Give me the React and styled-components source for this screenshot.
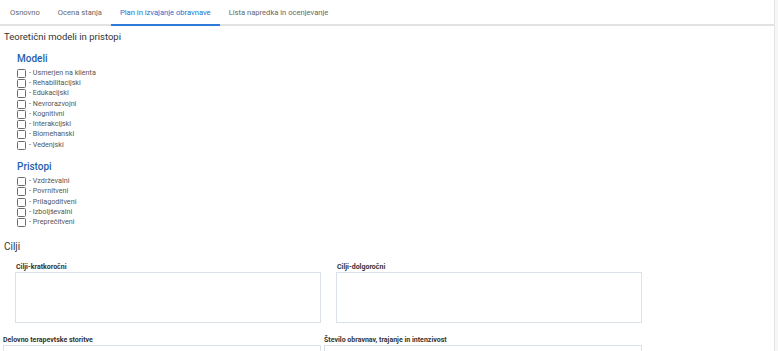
import React from 'react';
import styled, { createGlobalStyle } from 'styled-components';

const GlobalStyle = createGlobalStyle`
  html, body {
    margin: 0;
    padding: 0;
    background: #f6f6f6;
    font-family: Roboto, "Liberation Sans", sans-serif;
  }
`;

const Page = styled.div`
  width: 775px;
  height: 351px;
  background: #fff;
  border-right: 1px solid #e4e4e4;
  box-sizing: border-box;
  overflow: hidden;
`;

const Tabs = styled.div`
  display: flex;
  height: 24px;
  border-bottom: 2px solid #e2e2e2;
  box-sizing: content-box;
`;

const Tab = styled.div`
  display: flex;
  align-items: center;
  padding: 0 9px 0 ${p => (p.first ? 10 : 9)}px;
  margin-bottom: -2px;
  font-size: 7.6px;
  color: ${p => (p.active ? '#1d6fd0' : '#666')};
  border-bottom: 2px solid ${p => (p.active ? '#2f7ad8' : 'transparent')};
`;

const Title = styled.div`
  font-size: 9.5px;
  color: #333;
  padding: 5px 0 0 4px;
  line-height: 12px;
`;

const Group = styled.div`
  padding-left: 17px;
  margin-top: ${p => p.top}px;
`;

const GroupTitle = styled.div`
  font-size: 10px;
  font-weight: 500;
  color: #1f5fae;
  line-height: 12px;
  margin-bottom: 2px;
`;

const CheckRow = styled.label`
  display: flex;
  align-items: center;
  height: 10.3px;
  font-size: 7.2px;
  color: #555;
`;

const Box = styled.span`
  width: 7px;
  height: 7px;
  border: 1px solid #6a6a6a;
  border-radius: 1.5px;
  margin-right: 3px;
  margin-top: 2px;
  flex-shrink: 0;
`;

const Section = styled.div`
  font-size: 10px;
  color: #333;
  padding-left: 4px;
  margin-top: 14px;
  line-height: 12px;
`;

const Grid = styled.div`
  display: grid;
  grid-template-columns: ${p => p.cols};
  column-gap: ${p => p.gap}px;
  padding-left: ${p => p.pad}px;
  margin-top: ${p => p.top}px;
`;

const Field = styled.div`
  display: flex;
  flex-direction: column;
`;

const Label = styled.div`
  font-size: 7px;
  font-weight: 700;
  color: #333;
  line-height: 9px;
  padding-left: ${p => p.indent || 0}px;
`;

const Area = styled.div`
  height: ${p => p.h}px;
  border: 1px solid #dbe1e8;
  box-sizing: border-box;
  background: #fff;
`;

const models = [
  'Usmerjen na klienta',
  'Rehabilitacijski',
  'Edukacijski',
  'Nevrorazvojni',
  'Kognitivni',
  'Interakcijski',
  'Biomehanski',
  'Vedenjski',
];

const approaches = [
  'Vzdrževalni',
  'Povrnitveni',
  'Prilagoditveni',
  'Izboljševalni',
  'Preprečitveni',
];

const CheckList = ({ items }) => (
  <div>
    {items.map(item => (
      <CheckRow key={item}>
        <Box />
        {`- ${item}`}
      </CheckRow>
    ))}
  </div>
);

const App = () => (
  <Page>
    <GlobalStyle />
    <Tabs>
      <Tab first>Osnovno</Tab>
      <Tab>Ocena stanja</Tab>
      <Tab active>Plan in izvajanje obravnave</Tab>
      <Tab>Lista napredka in ocenjevanje</Tab>
    </Tabs>
    <Title>Teoretični modeli in pristopi</Title>
    <Group top={10}>
      <GroupTitle>Modeli</GroupTitle>
      <CheckList items={models} />
    </Group>
    <Group top={12}>
      <GroupTitle>Pristopi</GroupTitle>
      <CheckList items={approaches} />
    </Group>
    <Section>Cilji</Section>
    <Grid cols="306px 306px" gap={15} pad={15} top={10}>
      <Field>
        <Label indent={1}>Cilji-kratkoročni</Label>
        <Area h={51} />
      </Field>
      <Field>
        <Label indent={1}>Cilji-dolgoročni</Label>
        <Area h={51} />
      </Field>
    </Grid>
    <Grid cols="318px 318px" gap={3} pad={3} top={13}>
      <Field>
        <Label>Delovno terapevtske storitve</Label>
        <Area h={20} />
      </Field>
      <Field>
        <Label>Število obravnav, trajanje in intenzivost</Label>
        <Area h={20} />
      </Field>
    </Grid>
  </Page>
);

export default App;
